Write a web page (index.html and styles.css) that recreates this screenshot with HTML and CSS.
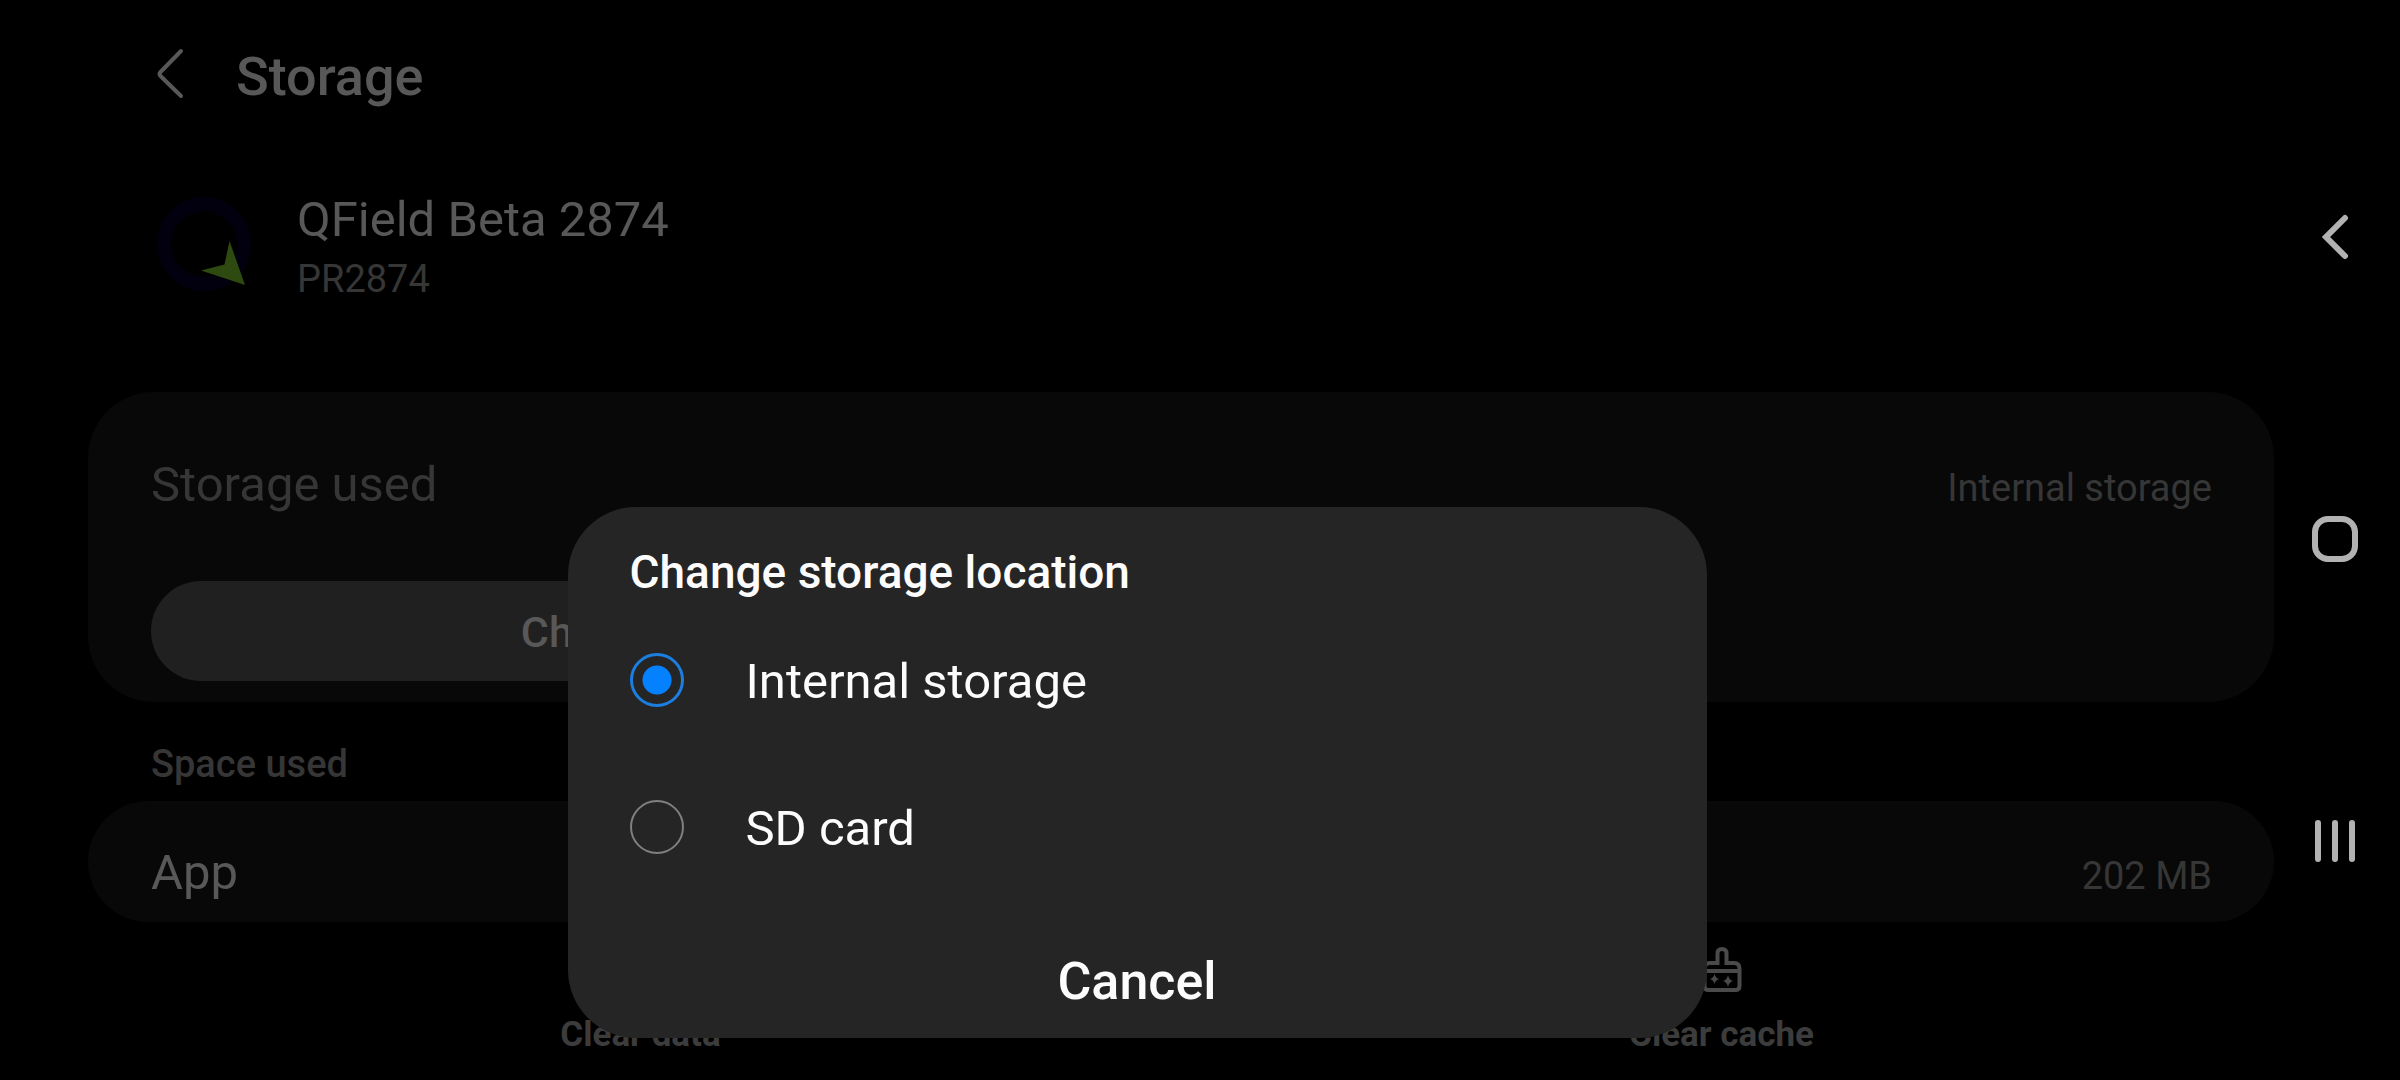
FILE: index.html
```html
<!DOCTYPE html>
<html lang="en">
<head>
    <meta charset="UTF-8">
    <title>Storage</title>
    <link rel="stylesheet" href="styles.css">
</head>
<body>
<div class="screen">
    <main class="page">
        <header class="header">
            <button class="back" type="button" aria-label="Back">
                <svg width="84" height="72" viewBox="0 0 84 72">
                    <path d="M29 10 L8.500 31 Q6.500 33 8.500 35 L29 55"/>
                </svg>
            </button>
            <h1>Storage</h1>
        </header>
        <div class="app">
            <svg class="logo" width="106" height="106" viewBox="0 0 106 106">
                <circle cx="53" cy="54" r="40"/>
                <path class="arrow" d="M78.500 51 L94 95 L50 80.500 L73.500 74.500 Z"/>
            </svg>
            <div>
                <p class="name">QField Beta 2874</p>
                <p class="sub">PR2874</p>
            </div>
        </div>
        <section class="card location">
            <div class="row">
                <h2 class="muted">Storage used</h2>
                <span class="value">Internal storage</span>
            </div>
            <button class="change" type="button">Change</button>
        </section>
        <h3 class="label">Space used</h3>
        <section class="card space">
            <div class="row">
                <span>App</span>
                <span class="value">202 MB</span>
            </div>
        </section>
        <div class="actions">
            <button type="button">
                <svg width="44" height="48" viewBox="0 0 44 48">
                    <path d="M4 11 H40 M16 11 V4 H28 V11 M8 11 V45 H36 V11 M17 20 V36 M27 20 V36"/>
                </svg>
                Clear data
            </button>
            <button type="button">
                <svg width="44" height="48" viewBox="0 0 44 48">
                    <path d="M17.500 18 V8.500 Q17.500 4 22 4 Q26.500 4 26.500 8.500 V18 H34 Q39.500 18 39.500 23.500 V41 Q39.500 45 35.500 45 H8.500 Q4.500 45 4.500 41 V23.500 Q4.500 18 10 18 Z M4.500 26 H39.500"/>
                    <path class="star" d="M14.500 29 Q15.500 33 19 34 Q15.500 35 14.500 39 Q13.500 35 10 34 Q13.500 33 14.500 29 Z M28 30 Q29 35 33 36 Q29 37 28 42 Q27 37 23 36 Q27 35 28 30 Z"/>
                </svg>
                Clear cache
            </button>
        </div>
        <div class="overlay">
            <form class="dialog" role="dialog" aria-labelledby="dialog-title">
                <h2 id="dialog-title">Change storage location</h2>
                <label class="option">
                    <input type="radio" name="place" checked>
                    Internal storage
                </label>
                <label class="option">
                    <input type="radio" name="place">
                    SD card
                </label>
                <button class="cancel" type="button">Cancel</button>
            </form>
        </div>
    </main>
    <nav class="nav">
        <button type="button" aria-label="Back">
            <svg width="52" height="48" viewBox="0 0 52 48"><path d="M34 5 L15 24 L34 43"/></svg>
        </button>
        <button type="button" aria-label="Home">
            <svg width="52" height="48" viewBox="0 0 52 48"><rect x="4" y="4" width="40" height="40" rx="13"/></svg>
        </button>
        <button type="button" aria-label="Recent apps">
            <svg width="52" height="48" viewBox="0 0 52 48"><path d="M7 6 V42 M24 6 V42 M41 6 V42"/></svg>
        </button>
    </nav>
</div>
</body>
</html>
```
FILE: styles.css
```css
*{
    margin: 0;
    padding: 0;
    box-sizing: border-box;
}
body{
    background: #000;
    color: #585858;
    font-family: Roboto, sans-serif;
    font-size: 49px;
    line-height: 60px;
}
button{
    border: none;
    background: none;
    color: inherit;
    font-family: inherit;
    cursor: pointer;
}
svg{
    display: block;
    fill: none;
    stroke: currentColor;
}
.screen{
    display: flex;
    min-height: 100vh;
}
.page{
    position: relative;
    flex: 1;
    padding: 41px 0 0 88px;
}
.header{
    display: flex;
    align-items: center;
    padding-left: 64px;
}
.header h1{
    font-size: 54px;
    font-weight: 500;
    line-height: 64px;
}
.back svg{
    stroke-width: 4;
    stroke-linecap: round;
}
.app{
    display: flex;
    align-items: flex-start;
    gap: 40px;
    margin: 77px 0 88px;
    padding-left: 63px;
}
.logo{
    stroke: #02000f;
    stroke-width: 14;
}
.logo .arrow{
    fill: #2f4a10;
    stroke: none;
}
.sub{
    margin-top: 4px;
    color: #363636;
    font-size: 38px;
    line-height: 50px;
}
.card{
    border-radius: 66px;
    background: #080808;
}
.location{
    padding: 63px 62px 21px 63px;
}
.space{
    padding: 42px 62px 19px 63px;
}
.row{
    display: flex;
    align-items: baseline;
    justify-content: space-between;
}
.muted{
    color: #363636;
    font-size: 49px;
    font-weight: 400;
}
.value{
    color: #363636;
    font-size: 38px;
    line-height: 50px;
}
.change{
    display: block;
    width: 43%;
    height: 100px;
    margin-top: 66px;
    padding-top: 2px;
    border-radius: 50px;
    background: #202020;
    font-size: 43px;
    font-weight: 500;
}
.label{
    margin: 37px 0 12px;
    padding-left: 63px;
    color: #363636;
    font-size: 38px;
    font-weight: 500;
    line-height: 50px;
}
.actions{
    display: flex;
    padding: 23px 12px 0;
    color: #3c3c3c;
}
.actions button{
    display: flex;
    flex: 1;
    flex-direction: column;
    align-items: center;
    gap: 20px;
    font-size: 35px;
    font-weight: 700;
    line-height: 44px;
}
.actions svg{
    color: #4a4a4a;
    stroke-width: 4;
}
.actions .star{
    fill: currentColor;
    stroke: none;
}
.overlay{
    position: absolute;
    inset: 0;
    display: flex;
    align-items: flex-end;
    justify-content: center;
    padding-bottom: 42px;
}
.dialog{
    width: calc(50% + 2px);
    padding: 37px 62px 24px;
    border-radius: 68px;
    background: #252525;
    color: #fcfcfc;
}
.dialog h2{
    margin-bottom: 8px;
    font-size: 46px;
    font-weight: 500;
    line-height: 56px;
}
.option{
    display: flex;
    align-items: center;
    gap: 62px;
    height: 147px;
}
.option input{
    appearance: none;
    width: 54px;
    height: 54px;
    margin-bottom: 4px;
    border: 2px solid #808080;
    border-radius: 50%;
}
.option input:checked{
    border: 3px solid #1c7fe0;
    background: radial-gradient(circle, #0381fe 14px, transparent 15px);
}
.cancel{
    display: block;
    width: 100%;
    margin-top: 48px;
    font-size: 52px;
    font-weight: 500;
    line-height: 64px;
}
.nav{
    display: flex;
    flex-direction: column;
    align-items: center;
    justify-content: center;
    gap: 254px;
    width: 126px;
    padding-bottom: 2px;
    color: #b2b2b2;
}
.nav svg{
    stroke-width: 6;
    stroke-linecap: round;
}
```
